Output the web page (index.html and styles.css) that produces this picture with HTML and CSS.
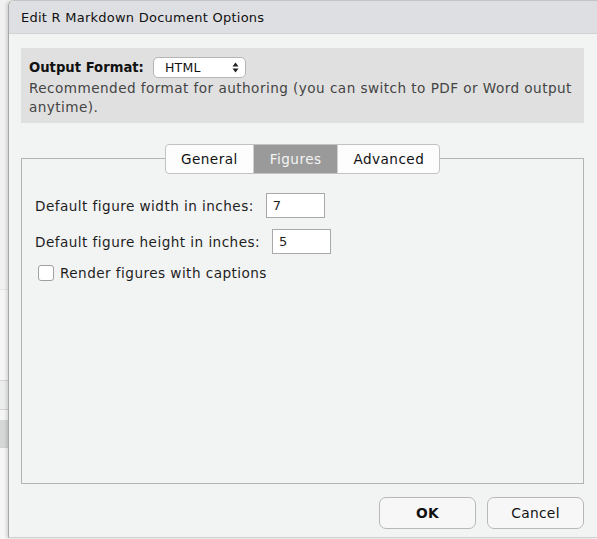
FILE: index.html
```html
<!DOCTYPE html>
<html>
<head>
<meta charset="utf-8">
<link rel="stylesheet" href="styles.css">
</head>
<body>
<div class="backdrop">
  <div class="strip s1"></div>
  <div class="strip s2"></div>
  <div class="strip s3"></div>
</div>
<div class="dialog">
  <div class="titlebar">Edit R Markdown Document Options</div>
  <div class="body">
    <div class="format-box">
      <div class="format-row">
        <span class="format-label">Output Format:</span>
        <span class="select">HTML
          <svg class="arrows" width="7" height="11" viewBox="0 0 7 11"><path d="M3.5 0.5 L6.5 4.5 L0.5 4.5 Z M3.5 10.5 L6.5 6.5 L0.5 6.5 Z" fill="#222"/></svg>
        </span>
      </div>
      <div class="format-desc">Recommended format for authoring (you can switch to PDF or Word output anytime).</div>
    </div>
    <div class="tabpanel">
      <div class="tabs">
        <span class="tab">General</span>
        <span class="tab active">Figures</span>
        <span class="tab adv">Advanced</span>
      </div>
      <div class="panel">
        <div class="field"><span>Default figure width in inches:</span><span class="input">7</span></div>
        <div class="field"><span>Default figure height in inches:</span><span class="input">5</span></div>
        <label class="check"><span class="box"></span>Render figures with captions</label>
      </div>
    </div>
    <div class="buttons">
      <button class="btn ok">OK</button>
      <button class="btn">Cancel</button>
    </div>
  </div>
</div>
</body>
</html>
```
FILE: styles.css
```css
html, body {
  margin: 0;
  padding: 0;
  width: 597px;
  height: 539px;
  overflow: hidden;
  background: #f4f5f5;
  font-family: "DejaVu Sans", "Open Sans", sans-serif;
  color: #1e1e1e;
}
* { box-sizing: border-box; }
body {
  display: flex;
}
.backdrop {
  width: 8px;
  flex: none;
  display: flex;
  flex-direction: column;
  background: #f6f6f6;
}
.strip { width: 8px; }
.s1 { height: 290px; background: #f1f1f1; border-bottom: 1px solid #e6e6e6; }
.s2 { height: 30px; margin-top: 90px; background: #eceeee; border-top: 1px solid #d4d4d4; border-bottom: 1px solid #d4d4d4; }
.s3 { height: 28px; background: #d6d7d7; border-bottom: 1px solid #d4d4d4; margin-top: 10px; }

.dialog {
  flex: 1;
  display: flex;
  flex-direction: column;
  border-left: 1px solid #a7a7a7;
  border-top: 1px solid #c4c4c4;
  border-top-left-radius: 6px;
  background: #f2f3f3;
  height: 538px;
  border-bottom: 1px solid #d0d0d0;
  box-shadow: -2px 0 3px rgba(0,0,0,0.12);
}
.titlebar {
  height: 33px;
  background: #dedfe2;
  border-bottom: 1px solid #d2d2d4;
  border-top-left-radius: 6px;
  font-size: 13px;
  letter-spacing: 0.25px;
  line-height: 33px;
  padding-left: 12px;
  color: #111;
  flex: none;
}
.body {
  flex: 1;
  padding: 14px 12px 7px 12px;
  display: flex;
  flex-direction: column;
}
.format-box {
  background: #e0e0e0;
  padding: 8px 8px 6px 8px;
  height: 75px;
  margin-right: 1px;
  flex: none;
}
.format-row {
  display: flex;
  align-items: center;
  height: 22px;
}
.format-label {
  font-weight: bold;
  font-size: 13.2px;
  color: #111;
  margin-right: 9px;
}
.select {
  width: 93px;
  height: 21px;
  background: #fff;
  border: 1px solid #b5b5b5;
  border-radius: 5px;
  font-size: 12.5px;
  letter-spacing: 0.3px;
  line-height: 19px;
  padding-left: 11px;
  position: relative;
  color: #111;
}
.arrows {
  position: absolute;
  right: 6px;
  top: 4px;
}
.format-desc {
  font-size: 13.6px;
  letter-spacing: 0.45px;
  line-height: 19px;
  color: #444;
  margin-top: 1px;
}
.tabpanel {
  margin-top: 21px;
  position: relative;
  flex: none;
  height: 340px;
  margin-right: 1px;
}
.tabs {
  position: absolute;
  left: 144px;
  top: 0;
  display: flex;
  height: 30px;
  border: 1px solid #c2c2c2;
  border-radius: 4px;
  background: #fdfdfd;
  overflow: hidden;
  z-index: 1;
}
.tab {
  font-size: 13.6px;
  letter-spacing: 0.45px;
  line-height: 28px;
  padding: 0 15px;
  color: #111;
}
.tab + .tab { border-left: 1px solid #d0d0d0; }
.tab.active {
  background: #9a9a9a;
  color: #f4f4f4;
  padding: 0 16px;
}
.tab.adv { padding: 0 15px 0 15px; }
.panel {
  margin-top: 14px;
  height: 326px;
  border: 1px solid #b4b4b4;
  padding: 34px 13px 0 13px;
}
.field {
  display: flex;
  align-items: center;
  font-size: 13.6px;
  letter-spacing: 0.45px;
  color: #1e1e1e;
  margin-bottom: 11px;
}
.input {
  display: inline-block;
  width: 59px;
  height: 25px;
  border: 1px solid #a9a9a9;
  background: #fff;
  margin-left: 12px;
  padding-left: 6px;
  line-height: 23px;
  font-size: 13px;
  letter-spacing: 0;
}
.check {
  display: flex;
  align-items: center;
  font-size: 13.6px;
  letter-spacing: 0.45px;
  margin-left: 3px;
  margin-top: 1px;
}
.box {
  width: 16px;
  height: 16px;
  border: 1px solid #a0a0a0;
  border-radius: 3px;
  background: #fff;
  margin-right: 6px;
}
.buttons {
  margin-top: auto;
  display: flex;
  justify-content: flex-end;
  gap: 11px;
  padding-right: 1px;
  margin-bottom: 1px;
}
.btn {
  width: 97px;
  height: 32px;
  border: 1px solid #b8b8b8;
  border-radius: 7px;
  background: #f7f7f8;
  font-family: "DejaVu Sans", sans-serif;
  font-size: 13.8px;
  letter-spacing: 0.3px;
  color: #111;
  padding: 0;
}
.btn.ok { font-weight: bold; }
```
